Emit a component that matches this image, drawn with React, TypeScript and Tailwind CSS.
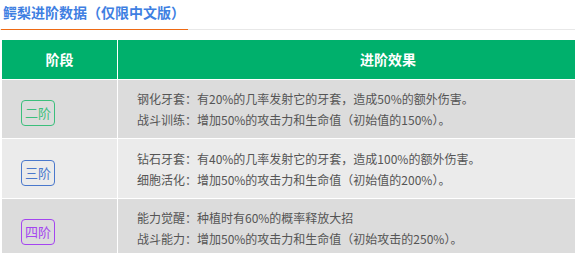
import React from "react";

const rows = [
  {
    stage: "二阶",
    color: "border-[#3cbf7c] text-[#3cbf7c]",
    bg: "bg-[#dcdcdc]",
    h: "h-[58px]",
    lines: [
      "钢化牙套：有20%的几率发射它的牙套，造成50%的额外伤害。",
      "战斗训练：增加50%的攻击力和生命值（初始值的150%）。",
    ],
  },
  {
    stage: "三阶",
    color: "border-[#4a78cc] text-[#4a78cc]",
    bg: "bg-[#ebebeb]",
    h: "h-[59px]",
    lines: [
      "钻石牙套：有40%的几率发射它的牙套，造成100%的额外伤害。",
      "细胞活化：增加50%的攻击力和生命值（初始值的200%）。",
    ],
  },
  {
    stage: "四阶",
    color: "border-[#a445f0] text-[#a445f0]",
    bg: "bg-[#dcdcdc]",
    h: "h-[58px]",
    lines: [
      "能力觉醒：种植时有60%的概率释放大招",
      "战斗能力：增加50%的攻击力和生命值（初始攻击的250%）。",
    ],
  },
];

export default function App() {
  return (
    <div className="w-[575px] h-[253px] overflow-hidden bg-white font-['Noto_Sans_CJK_SC','Microsoft_YaHei',sans-serif]">
      <div className="w-[656px] border-b border-[#e8e8e8] pt-[2px] pl-[1px]">
        <div className="w-[187px] -mb-px border-b border-[#ee6a14] pb-[7px] pl-[2px] text-[14px] leading-[20px] font-bold text-[#3f7fe2]">
          鳄梨进阶数据（仅限中文版）
        </div>
      </div>
      <div className="mt-[10px] ml-[2px] w-[656px] grid grid-cols-[115px_1fr] gap-px bg-white">
        <div className="h-[39px] bg-[#00b06c] flex items-center justify-center text-white font-bold text-[14px]">
          阶段
        </div>
        <div className="h-[39px] bg-[#00b06c] flex items-center justify-center text-white font-bold text-[14px]">
          进阶效果
        </div>
        {rows.map((r) => (
          <React.Fragment key={r.stage}>
            <div className={`${r.h} ${r.bg} flex items-center pl-[19px]`}>
              <div
                className={`mt-[8px] w-[34px] h-[26px] border rounded-[4px] flex items-center justify-center text-[13px] ${r.color}`}
              >
                {r.stage}
              </div>
            </div>
            <div
              className={`${r.h} ${r.bg} flex flex-col justify-center pl-[19px] text-[12px] leading-[21px] text-[#555555]`}
            >
              {r.lines.map((l) => (
                <div key={l}>{l}</div>
              ))}
            </div>
          </React.Fragment>
        ))}
      </div>
    </div>
  );
}
